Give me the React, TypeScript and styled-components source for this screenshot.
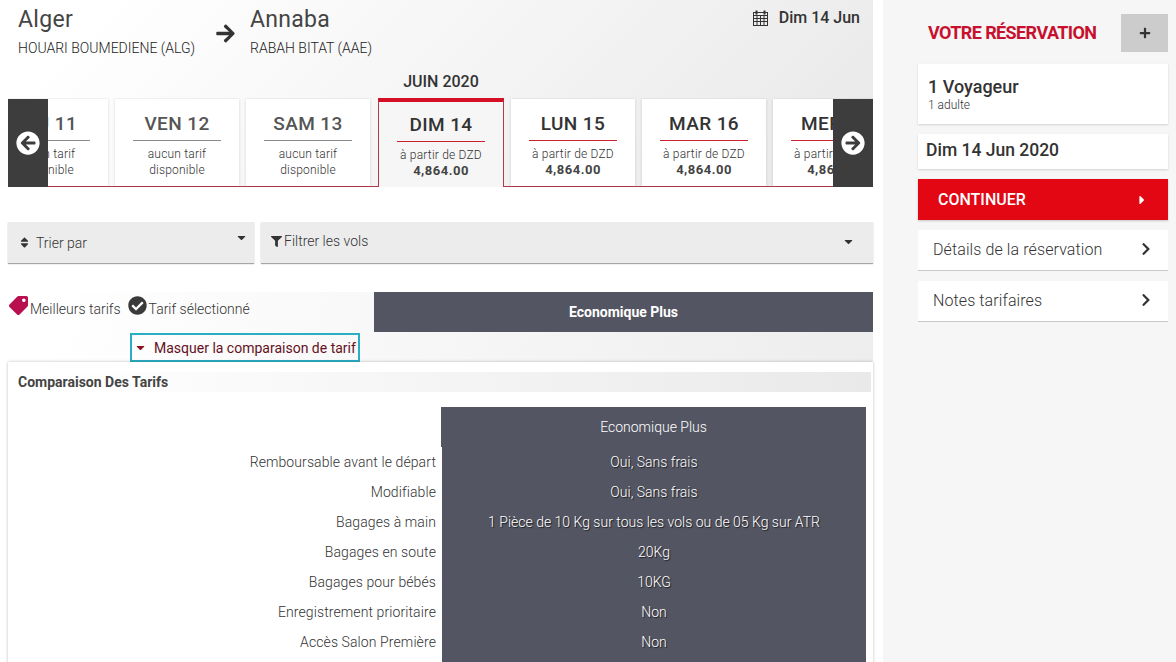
import React from 'react';
import styled, { createGlobalStyle } from 'styled-components';
import {
  FaArrowRight,
  FaArrowCircleLeft,
  FaArrowCircleRight,
  FaSort,
  FaFilter,
  FaTag,
  FaCheckCircle,
  FaCaretDown,
  FaCaretRight,
  FaChevronRight,
  FaPlus,
} from 'react-icons/fa';

const GlobalStyle = createGlobalStyle`
  html, body {
    margin: 0;
    padding: 0;
    background: #fff;
    font-family: Roboto, "Liberation Sans", sans-serif;
    color: #333;
  }
  * { box-sizing: border-box; }
`;

const Page = styled.div`
  display: flex;
  width: 1176px;
  height: 662px;
  overflow: hidden;
  background: #fff;
`;

const Main = styled.main`
  width: 873px;
  flex: none;
`;

const Top = styled.div`
  height: 187px;
  background: linear-gradient(135deg, #ffffff 10%, #e8e8e8 100%);
`;

const Route = styled.div`
  height: 72px;
  padding: 6px 13px 0 18px;
  display: flex;
  align-items: flex-start;
`;

const Place = styled.div<{ $w: number }>`
  width: ${(p) => p.$w}px;
  flex: none;
`;

const City = styled.div`
  font-size: 23px;
  line-height: 28px;
  color: #444;
  letter-spacing: 0.3px;
`;

const Airport = styled.div`
  font-size: 14px;
  line-height: 16px;
  margin-top: 6px;
  font-weight: 300;
  color: #222;
`;

const RouteArrow = styled.div`
  width: 35px;
  flex: none;
  margin: 17px 0 0 -2px;
  font-size: 21px;
  color: #333;
  line-height: 0;
`;

const DateLabel = styled.div`
  margin-left: auto;
  display: flex;
  align-items: center;
  gap: 11px;
  font-size: 16px;
  font-weight: 500;
  line-height: 20px;
  margin-top: 2px;
  color: #333;
`;

const Month = styled.div`
  height: 26px;
  padding-left: 9px;
  text-align: center;
  font-size: 16px;
  font-weight: 500;
  line-height: 19px;
  color: #333;
`;

const Carousel = styled.div`
  position: relative;
  margin-left: 8px;
  height: 89px;
  padding-top: 1px;
  overflow: hidden;
`;

const Track = styled.div`
  display: flex;
  height: 88px;
  margin-left: -24px;
  width: 960px;
  gap: 7px;
  border-bottom: 1px solid #b23a48;
`;

const Day = styled.div<{ $selected?: boolean; $width?: number }>`
  flex: none;
  width: ${(p) => p.$width ?? 124}px;
  height: ${(p) => (p.$selected ? '89px' : '87px')};
  margin: ${(p) => (p.$selected ? '-1px 0 0 1px' : '0')};
  padding: ${(p) => (p.$selected ? '6px' : '8px')} 18px 0;
  text-align: center;
  background: ${(p) => (p.$selected ? '#f6f6f6' : '#fff')};
  box-shadow: ${(p) => (p.$selected ? 'none' : '0 0 3px rgba(0, 0, 0, 0.14)')};
  border-top: ${(p) => (p.$selected ? '4px solid #d50f25' : 'none')};
  border-left: ${(p) => (p.$selected ? '1px solid #b23a48' : 'none')};
  border-right: ${(p) => (p.$selected ? '1px solid #b23a48' : 'none')};
`;

const DayName = styled.div<{ $muted?: boolean }>`
  font-size: 19px;
  font-weight: 500;
  line-height: 24px;
  height: 34px;
  padding-top: 5px;
  letter-spacing: 0.4px;
  color: ${(p) => (p.$muted ? '#555' : '#333')};
  border-bottom: 1px solid ${(p) => (p.$muted ? '#8a8a8a' : '#c8202f')};
  white-space: nowrap;
`;

const DayNote = styled.div`
  margin-top: 5px;
  font-size: 12px;
  line-height: 16px;
  font-weight: 300;
  letter-spacing: 0.2px;
  color: #333;
  white-space: nowrap;
`;

const Price = styled.div`
  font-size: 13px;
  line-height: 16px;
  font-weight: 700;
  color: #444;
  letter-spacing: 0.5px;
`;

const NavButton = styled.div<{ $side: 'left' | 'right' }>`
  position: absolute;
  top: 1px;
  bottom: 0;
  ${(p) => p.$side}: 0;
  width: 40px;
  background: #3d3d3d;
  color: #fff;
  display: flex;
  align-items: center;
  justify-content: center;
  font-size: 24px;
`;

const Filters = styled.div`
  display: flex;
  gap: 7px;
  margin: 35px 0 0 8px;
  height: 41px;
`;

const FilterBox = styled.div<{ $grow?: boolean }>`
  flex: ${(p) => (p.$grow ? '1' : 'none')};
  width: ${(p) => (p.$grow ? 'auto' : '246px')};
  background: #ececec;
  box-shadow: 0 1px 1px rgba(0, 0, 0, 0.35);
  display: flex;
  align-items: center;
  font-size: 14px;
  font-weight: 300;
  color: #333;
  position: relative;
`;

const SortLabel = styled.span`
  display: flex;
  align-items: center;
  gap: 5px;
  padding: 0 0 0 10px;
  line-height: 1;
`;

const FilterLabel = styled.span`
  display: flex;
  align-items: center;
  gap: 2px;
  padding: 0 0 3px 10px;
`;

const Caret = styled.span<{ $right: number; $up: number }>`
  position: absolute;
  right: ${(p) => p.$right}px;
  top: ${(p) => p.$up}px;
  font-size: 13px;
  line-height: 0;
  color: #333;
`;

const FareBand = styled.div`
  margin: 29px 0 0 8px;
  background: linear-gradient(100deg, #ffffff 5%, #ededed 100%);
`;

const LegendRow = styled.div`
  display: flex;
  height: 40px;
`;

const Legend = styled.div`
  width: 366px;
  flex: none;
  display: flex;
  align-items: center;
  font-size: 14px;
  font-weight: 300;
  color: #333;
  padding: 0 0 7px 1px;
`;

const LegendItem = styled.span`
  display: flex;
  align-items: center;
  margin-right: 7px;
`;

const TagIcon = styled(FaTag)`
  font-size: 19px;
  color: #b8104f;
  transform: rotate(90deg) translate(-3px, 0);
  margin-right: 2px;
`;

const CheckIcon = styled(FaCheckCircle)`
  font-size: 19px;
  color: #3a3a3a;
  transform: translateY(-3px);
  margin-right: 2px;
`;

const FareHead = styled.div`
  flex: 1;
  background: #535562;
  color: #fff;
  text-align: center;
  font-size: 14px;
  font-weight: 700;
  line-height: 40px;
`;

const ToggleRow = styled.div`
  height: 30px;
  padding: 1px 0 0 122px;
`;

const Toggle = styled.div`
  width: 230px;
  height: 29px;
  border: 2px solid #2badc4;
  display: flex;
  align-items: center;
  gap: 7px;
  padding-left: 2px;
  font-size: 14px;
  font-weight: 400;
  color: #64101c;
  white-space: nowrap;
`;

const ToggleCaret = styled(FaCaretDown)`
  font-size: 13px;
  color: #8c1020;
  flex: none;
`;

const Panel = styled.section`
  margin-left: 8px;
  background: #fff;
  box-shadow: 0 0 3px rgba(0, 0, 0, 0.25);
  padding: 10px 2px 0 0;
  height: 320px;
`;

const PanelTitle = styled.h3`
  margin: 0;
  height: 20px;
  padding-left: 10px;
  font-size: 14px;
  line-height: 20px;
  font-weight: 700;
  color: #444;
  background: linear-gradient(90deg, #ffffff 5%, #e9e9e9 100%);
`;

const CompareTable = styled.div`
  margin: 15px 5px 0 0;
  display: grid;
  grid-template-columns: 429px 1fr;
  grid-template-rows: 40px;
  grid-auto-rows: 30px;
`;

const ColumnHead = styled.div`
  grid-column: 2;
  margin-left: 4px;
  background: #535562;
  color: #fff;
  text-align: center;
  font-size: 14px;
  font-weight: 300;
  line-height: 40px;
`;

const RowLabel = styled.div`
  text-align: right;
  padding-right: 1px;
  font-size: 14px;
  font-weight: 300;
  letter-spacing: 0.1px;
  line-height: 30px;
  color: #333;
  white-space: nowrap;
`;

const RowValue = styled.div`
  margin-left: 5px;
  background: #535562;
  color: #fff;
  text-align: center;
  font-size: 14px;
  font-weight: 300;
  line-height: 30px;
  white-space: nowrap;
  text-shadow: 1px 1px 1px rgba(0, 0, 0, 0.7);
`;

const Aside = styled.aside`
  width: 293px;
  margin-left: 10px;
  flex: none;
  background: #f6f6f6;
  padding: 14px 8px 0 35px;
`;

const AsideHead = styled.div`
  display: flex;
  align-items: center;
  justify-content: space-between;
  height: 38px;
  margin-left: 10px;
`;

const AsideTitle = styled.h2`
  margin: 0 0 2px;
  font-size: 18px;
  font-weight: 700;
  letter-spacing: -0.6px;
  color: #c8102e;
`;

const PlusButton = styled.div`
  width: 47px;
  height: 38px;
  background: #cccccc;
  display: flex;
  align-items: center;
  justify-content: center;
  font-size: 12px;
  color: #333;
`;

const Card = styled.div<{ $h: number; $mt: number }>`
  height: ${(p) => p.$h}px;
  margin-top: ${(p) => p.$mt}px;
  background: #fff;
  box-shadow: 0 1px 2px rgba(0, 0, 0, 0.15);
`;

const TravellerCard = styled(Card)`
  padding: 13px 10px 0;
`;

const Travellers = styled.div`
  font-size: 18px;
  font-weight: 500;
  line-height: 20px;
  color: #333;
`;

const Adults = styled.div`
  margin-top: 2px;
  font-size: 12px;
  font-weight: 300;
  line-height: 13px;
`;

const DateCard = styled(Card)`
  padding-left: 8px;
  font-size: 17.5px;
  font-weight: 500;
  line-height: 33px;
  color: #333;
`;

const Continue = styled.div`
  margin-top: 10px;
  height: 41px;
  background: #e30613;
  color: #fff;
  display: flex;
  align-items: center;
  justify-content: space-between;
  padding: 0 19px 0 20px;
  font-size: 16px;
  font-weight: 500;
  box-shadow: 0 1px 2px rgba(0, 0, 0, 0.2);
`;

const LinkRow = styled.div`
  margin-top: 10px;
  height: 41px;
  background: #fff;
  border-bottom: 1px solid #c9c9c9;
  display: flex;
  align-items: center;
  justify-content: space-between;
  padding: 0 15px 2px 15px;
  font-size: 16px;
  font-weight: 300;
  letter-spacing: 0.1px;
  color: #333;
`;

const CalendarIcon = () => (
  <svg width="15" height="16" viewBox="0 0 15 16" fill="none" stroke="#333" strokeWidth="1">
    <rect x="0.5" y="2.5" width="14" height="13" />
    <path d="M0.5 5.5h14M0.5 8.5h14M0.5 11.5h14M4 5.5v10M7.5 5.5v10M11 5.5v10" />
    <path d="M3.5 0.5v4M11.5 0.5v4" strokeWidth="2" />
  </svg>
);

type DayData = { name: string; note?: string[]; price?: string; selected?: boolean; width?: number };

const days: DayData[] = [
  { name: 'JEU 11', note: ['aucun tarif', 'disponible'] },
  { name: 'VEN 12', note: ['aucun tarif', 'disponible'] },
  { name: 'SAM 13', note: ['aucun tarif', 'disponible'] },
  { name: 'DIM 14', price: '4,864.00', selected: true, width: 126 },
  { name: 'LUN 15', price: '4,864.00' },
  { name: 'MAR 16', price: '4,864.00' },
  { name: 'MER 17', price: '4,864.00' },
];

const rows = [
  ['Remboursable avant le départ', 'Oui, Sans frais'],
  ['Modifiable', 'Oui, Sans frais'],
  ['Bagages à main', '1 Pièce de 10 Kg sur tous les vols ou de 05 Kg sur ATR'],
  ['Bagages en soute', '20Kg'],
  ['Bagages pour bébés', '10KG'],
  ['Enregistrement prioritaire', 'Non'],
  ['Accès Salon Première', 'Non'],
  ['', ''],
];

const App = () => (
  <Page>
    <GlobalStyle />
    <Main>
      <Top>
        <Route>
          <Place $w={199}>
            <City>Alger</City>
            <Airport>HOUARI BOUMEDIENE (ALG)</Airport>
          </Place>
          <RouteArrow>
            <FaArrowRight />
          </RouteArrow>
          <Place $w={200}>
            <City>Annaba</City>
            <Airport>RABAH BITAT (AAE)</Airport>
          </Place>
          <DateLabel>
            <CalendarIcon />
            Dim 14 Jun
          </DateLabel>
        </Route>
        <Month>JUIN 2020</Month>
        <Carousel>
          <Track>
            {days.map((d) => (
              <Day key={d.name} $selected={d.selected} $width={d.width}>
                <DayName $muted={!!d.note}>{d.name}</DayName>
                {d.note ? (
                  <DayNote>
                    {d.note[0]}
                    <br />
                    {d.note[1]}
                  </DayNote>
                ) : (
                  <>
                    <DayNote>à partir de DZD</DayNote>
                    <Price>{d.price}</Price>
                  </>
                )}
              </Day>
            ))}
          </Track>
          <NavButton $side="left">
            <FaArrowCircleLeft />
          </NavButton>
          <NavButton $side="right">
            <FaArrowCircleRight />
          </NavButton>
        </Carousel>
      </Top>

      <Filters>
        <FilterBox>
          <SortLabel>
            <FaSort size={13} />
            Trier par
          </SortLabel>
          <Caret $right={6} $up={9}>
            <FaCaretDown />
          </Caret>
        </FilterBox>
        <FilterBox $grow>
          <FilterLabel>
            <FaFilter size={11} />
            Filtrer les vols
          </FilterLabel>
          <Caret $right={18} $up={13}>
            <FaCaretDown />
          </Caret>
        </FilterBox>
      </Filters>

      <FareBand>
        <LegendRow>
          <Legend>
            <LegendItem>
              <TagIcon />
              Meilleurs tarifs
            </LegendItem>
            <LegendItem>
              <CheckIcon />
              Tarif sélectionné
            </LegendItem>
          </Legend>
          <FareHead>Economique Plus</FareHead>
        </LegendRow>
        <ToggleRow>
          <Toggle>
            <ToggleCaret />
            Masquer la comparaison de tarif
          </Toggle>
        </ToggleRow>
      </FareBand>

      <Panel>
        <PanelTitle>Comparaison Des Tarifs</PanelTitle>
        <CompareTable>
          <span />
          <ColumnHead>Economique Plus</ColumnHead>
          {rows.map(([label, value], i) => (
            <React.Fragment key={i}>
              <RowLabel>{label}</RowLabel>
              <RowValue>{value}</RowValue>
            </React.Fragment>
          ))}
        </CompareTable>
      </Panel>
    </Main>

    <Aside>
      <AsideHead>
        <AsideTitle>VOTRE RÉSERVATION</AsideTitle>
        <PlusButton>
          <FaPlus />
        </PlusButton>
      </AsideHead>
      <TravellerCard $h={60} $mt={12}>
        <Travellers>1 Voyageur</Travellers>
        <Adults>1 adulte</Adults>
      </TravellerCard>
      <DateCard $h={35} $mt={10}>
        Dim 14 Jun 2020
      </DateCard>
      <Continue>
        CONTINUER
        <FaCaretRight size={14} />
      </Continue>
      <LinkRow>
        Détails de la réservation
        <FaChevronRight size={14} />
      </LinkRow>
      <LinkRow>
        Notes tarifaires
        <FaChevronRight size={14} />
      </LinkRow>
    </Aside>
  </Page>
);

export default App;
